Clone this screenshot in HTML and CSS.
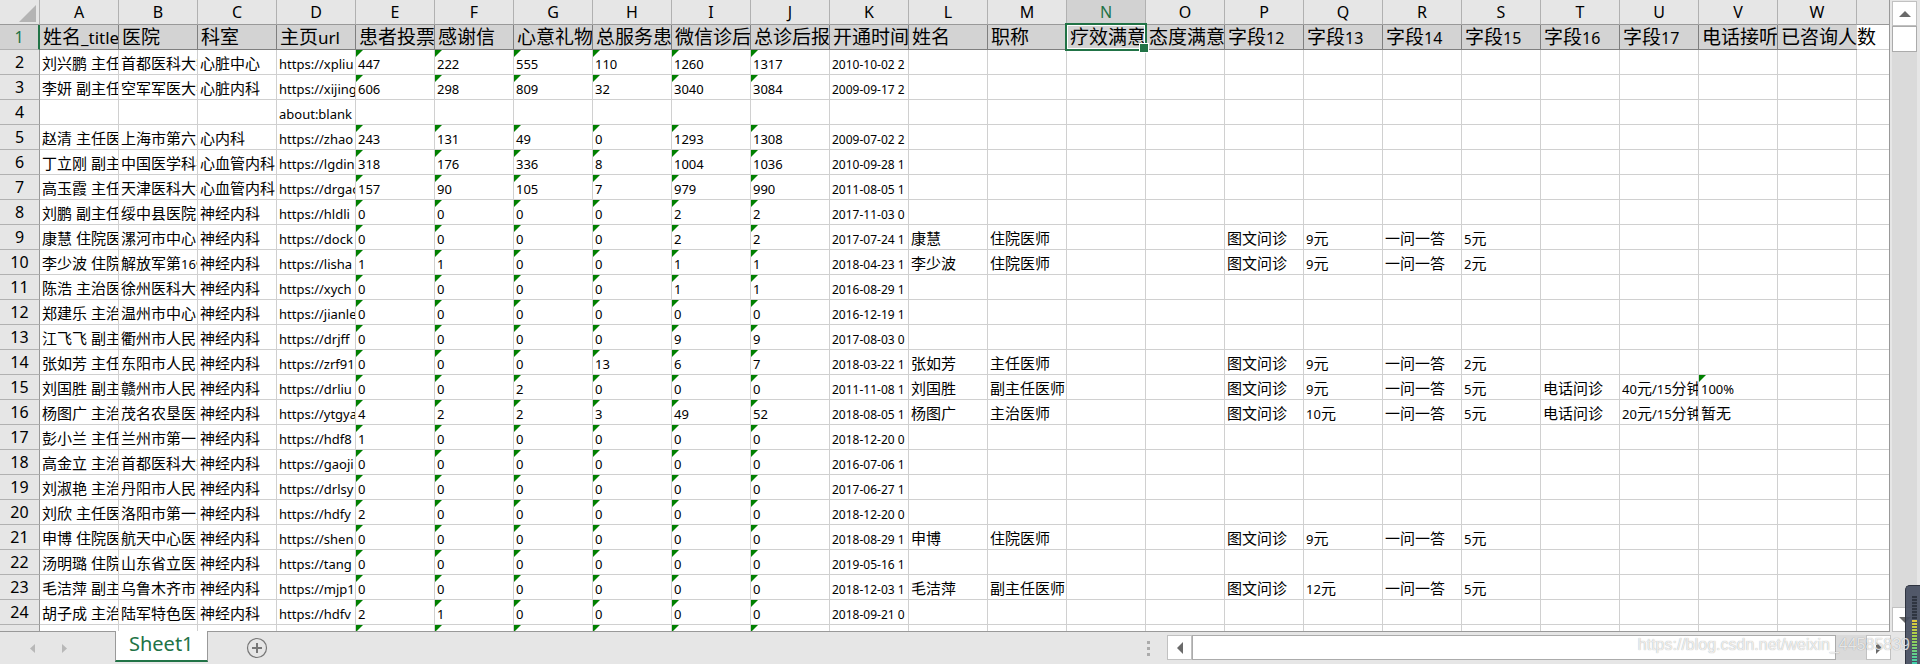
FILE: index.html
```html
<!DOCTYPE html>
<html lang="zh-CN">
<head>
    <meta charset="UTF-8">
    <meta name="viewport" content="width=device-width, initial-scale=1.0">
    <title>Sheet1</title>
    <link rel="stylesheet" href="styles.css">
</head>
<body>

    <main class="workspace">
        <div class="sheet">
            <table class="grid" id="grid">
                <thead></thead>
                <tbody></tbody>
            </table>
        </div>
        <div class="vscroll">
            <button type="button" class="scroll-btn" aria-label="Scroll up">
                <svg width="12" height="6" viewBox="0 0 12 6"><path d="M6 0L12 6H0Z"/></svg>
            </button>
            <div class="vthumb"></div>
            <div class="track"></div>
            <button type="button" class="scroll-btn" aria-label="Scroll down">
                <svg width="12" height="6" viewBox="0 0 12 6"><path d="M0 0H12L6 6Z"/></svg>
            </button>
        </div>
    </main>

    <footer class="bottom-bar">
        <div class="sheet-nav">
            <button type="button" class="nav-btn" aria-label="Previous sheet">
                <svg width="5" height="9" viewBox="0 0 5 9"><path d="M5 0V9L0 4.500Z"/></svg>
            </button>
            <button type="button" class="nav-btn" aria-label="Next sheet">
                <svg width="5" height="9" viewBox="0 0 5 9"><path d="M0 0V9L5 4.500Z"/></svg>
            </button>
        </div>
        <button type="button" class="sheet-tab">Sheet1</button>
        <button type="button" class="add-btn" aria-label="New sheet">
            <svg width="22" height="22" viewBox="0 0 22 22" fill="none" stroke="#777">
                <circle cx="11" cy="11" r="9.500" stroke-width="1.200"/>
                <path d="M11 6V16M6 11H16" stroke-width="2"/>
            </svg>
        </button>
        <div class="splitter"><span></span><span></span><span></span></div>
        <div class="hscroll">
            <button type="button" class="scroll-btn" aria-label="Scroll left">
                <svg width="6" height="12" viewBox="0 0 6 12"><path d="M6 0V12L0 6Z"/></svg>
            </button>
            <div class="hthumb"></div>
            <div class="track"></div>
            <button type="button" class="scroll-btn" aria-label="Scroll right">
                <svg width="6" height="12" viewBox="0 0 6 12"><path d="M0 0V12L6 6Z"/></svg>
            </button>
        </div>
    </footer>

    <div class="meter"><div class="meter-off"></div><div class="meter-on"></div></div>
    <div class="watermark">https://blog.csdn.net/weixin_44585839</div>

    <script src="script.js"></script>
</body>
</html>
```
FILE: styles.css
```css
* {
    box-sizing: border-box;
}

body {
    margin: 0;
    height: 100vh;
    display: flex;
    flex-direction: column;
    overflow: hidden;
    position: relative;
    background: #e6e6e6;
    color: #000;
    font-family: "Noto Sans", "Noto Sans CJK SC", sans-serif;
}

button {
    margin: 0;
    padding: 0;
    border: none;
    background: none;
    font-family: inherit;
    cursor: pointer;
}

svg {
    display: block;
}

.workspace {
    flex: 1;
    min-height: 0;
    display: flex;
}

/* grid */
.sheet {
    flex: 1;
    min-width: 0;
    overflow: hidden;
    background: #fff;
    border-right: 1px solid #999;
    border-bottom: 1px solid #999;
}

.grid {
    width: 1936px;
    table-layout: fixed;
    border-collapse: separate;
    border-spacing: 0;
}

.grid th,
.grid td {
    height: 25px;
    padding: 0;
    font-weight: normal;
    white-space: nowrap;
    overflow: hidden;
    border-right: 1px solid #d0d0d0;
    border-bottom: 1px solid #d0d0d0;
}

.grid th {
    background: #e6e6e6;
    font-size: 16px;
    line-height: 24px;
    text-align: center;
}

.grid thead th {
    border-right-color: #b1b1b1;
    border-bottom-color: #999;
}

.grid .corner {
    width: 40px;
}

.corner svg {
    margin: 2px 3px 0 auto;
}

.grid tbody th {
    border-right-color: #999;
    border-bottom-color: #b1b1b1;
}

.grid thead .active {
    background: #d2d2d2;
    color: #217346;
}

.grid tbody .active {
    background: #d2d2d2;
    color: #217346;
    border-right: 2px solid #217346;
}

.grid td {
    position: relative;
    padding: 2px 0 0 2px;
    font-size: 15px;
    line-height: 22px;
    text-align: left;
}

.latin,
.num {
    font-size: 13px;
    line-height: 1;
}

.date {
    font-size: 12px;
}

.grid .title td {
    padding: 0 0 0 3px;
    font-size: 19px;
    line-height: 24px;
    background: #d3d3d3;
    border-right-color: #7f7f7f;
    border-bottom-color: #7f7f7f;
}

.title .latin {
    font-size: 17px;
}

.title .num {
    font-size: 16px;
}

/* the last title is wider than its column */
.grid .title .spill {
    overflow: visible;
    z-index: 1;
    border-right: none;
}

.grid .title .blank {
    background: #fff;
    border-color: #d0d0d0;
}

.flag::before {
    content: "";
    position: absolute;
    top: 0;
    left: 0;
    border-top: 7px solid #008000;
    border-right: 7px solid transparent;
}

/* selected cell */
.grid .title .selected {
    overflow: visible;
}

.selected::before {
    content: "";
    position: absolute;
    z-index: 2;
    inset: -2px -2px -2px -2px;
    border: 2px solid #217346;
    box-shadow: inset 0 0 0 1px #fff;
}

.selected::after {
    content: "";
    position: absolute;
    z-index: 3;
    right: -4px;
    bottom: -4px;
    width: 8px;
    height: 8px;
    background: #217346;
    border: 1px solid #fff;
}

/* scrollbars */
.vscroll {
    display: flex;
    flex-direction: column;
    width: 30px;
    padding: 1px 3px 0 2px;
}

.scroll-btn {
    flex: none;
    width: 25px;
    height: 25px;
    display: flex;
    align-items: center;
    justify-content: center;
    background: #fff;
    border: 1px solid #c1c1c1;
}

.scroll-btn svg {
    fill: #6a6a6a;
}

.vthumb {
    height: 26px;
    background: #fff;
    border: 1px solid #ababab;
}

.track {
    flex: 1;
    background: #dadada;
}

/* bottom bar */
.bottom-bar {
    display: flex;
    height: 32px;
}

.sheet-nav {
    width: 115px;
    display: flex;
    align-items: center;
    gap: 27px;
    padding-left: 30px;
}

.nav-btn svg {
    fill: #b8b8b8;
}

.sheet-tab {
    position: relative;
    height: 31px;
    margin-top: -1px;
    padding: 0 13px 3px;
    font-size: 20px;
    line-height: 24px;
    color: #217346;
    background: #fff;
    border: 1px solid #999;
    border-top: none;
    border-bottom: 2px solid #217346;
}

.add-btn {
    margin-left: 38px;
    align-self: center;
}

.splitter {
    display: flex;
    flex-direction: column;
    justify-content: center;
    gap: 3px;
    margin-left: auto;
    margin-right: 17px;
}

.splitter span {
    width: 3px;
    height: 3px;
    background: #ababab;
}

.hscroll {
    display: flex;
    width: calc(38% - 6px);
    height: 25px;
    margin-top: 3px;
    margin-right: 29px;
}

.hthumb {
    width: 89%;
    background: #fff;
    border: 1px solid #ababab;
}

/* overlays */
.watermark {
    position: absolute;
    right: 10px;
    bottom: 8px;
    font-family: "Liberation Sans", Arial, sans-serif;
    font-size: 16px;
    line-height: 22px;
    color: rgba(255, 255, 255, 0.8);
    text-shadow: 0 0 1px rgba(0, 0, 0, 0.4);
    pointer-events: none;
}

.meter {
    position: absolute;
    right: 0;
    bottom: 0;
    width: 15px;
    height: 79px;
    padding: 10px 3px 0 6px;
    background: rgba(70, 77, 96, 0.93);
    border: 1px solid #2f3440;
    border-right: none;
    border-bottom: none;
    border-radius: 5px 0 0 0;
}

.meter-off {
    height: 24px;
    background: repeating-linear-gradient(#2f3541 0 2px, #4d5464 2px 3px);
}

.meter-on {
    height: 44px;
    background: repeating-linear-gradient(transparent 0 2px, #464d60 2px 3px), linear-gradient(#e5c93c, #9ed04e 40%, #3fcfae);
}
```
FILE: script.js
```js
const columns = "ABCDEFGHIJKLMNOPQRSTUVW".split("");

const titles = ["姓名_title", "医院", "科室", "主页url", "患者投票", "感谢信", "心意礼物", "总服务患",
    "微信诊后", "总诊后报", "开通时间", "姓名", "职称", "疗效满意", "态度满意", "字段12", "字段13",
    "字段14", "字段15", "字段16", "字段17", "电话接听", "已咨询人数"];

// name, hospital, department, url, six counters, open date, then columns L to V
const rows = [
    ["刘兴鹏 主任", "首都医科大学", "心脏中心", "https://xpliu", "447 222 555 110 1260 1317", "2010-10-02 2"],
    ["李妍 副主任", "空军军医大学", "心脏内科", "https://xijing", "606 298 809 32 3040 3084", "2009-09-17 2"],
    ["", "", "", "about:blank", "", ""],
    ["赵清 主任医", "上海市第六人", "心内科", "https://zhao", "243 131 49 0 1293 1308", "2009-07-02 2"],
    ["丁立刚 副主", "中国医学科学", "心血管内科", "https://lgdin", "318 176 336 8 1004 1036", "2010-09-28 1"],
    ["高玉霞 主任", "天津医科大学", "心血管内科", "https://drgao", "157 90 105 7 979 990", "2011-08-05 1"],
    ["刘鹏 副主任", "绥中县医院", "神经内科", "https://hldli", "0 0 0 0 2 2", "2017-11-03 0"],
    ["康慧 住院医", "漯河市中心", "神经内科", "https://dock", "0 0 0 0 2 2", "2017-07-24 1", "康慧", "住院医师", "", "", "图文问诊", "9元", "一问一答", "5元"],
    ["李少波 住院", "解放军第169", "神经内科", "https://lisha", "1 1 0 0 1 1", "2018-04-23 1", "李少波", "住院医师", "", "", "图文问诊", "9元", "一问一答", "2元"],
    ["陈浩 主治医", "徐州医科大学", "神经内科", "https://xych", "0 0 0 0 1 1", "2016-08-29 1"],
    ["郑建乐 主治", "温州市中心", "神经内科", "https://jianle", "0 0 0 0 0 0", "2016-12-19 1"],
    ["江飞飞 副主", "衢州市人民", "神经内科", "https://drjff", "0 0 0 0 9 9", "2017-08-03 0"],
    ["张如芳 主任", "东阳市人民", "神经内科", "https://zrf91", "0 0 0 13 6 7", "2018-03-22 1", "张如芳", "主任医师", "", "", "图文问诊", "9元", "一问一答", "2元"],
    ["刘国胜 副主", "赣州市人民", "神经内科", "https://drliu", "0 0 2 0 0 0", "2011-11-08 1", "刘国胜", "副主任医师", "", "", "图文问诊", "9元", "一问一答", "5元", "电话问诊", "40元/15分钟", "100%"],
    ["杨图广 主治", "茂名农垦医", "神经内科", "https://ytgya", "4 2 2 3 49 52", "2018-08-05 1", "杨图广", "主治医师", "", "", "图文问诊", "10元", "一问一答", "5元", "电话问诊", "20元/15分钟", "暂无"],
    ["彭小兰 主任", "兰州市第一", "神经内科", "https://hdf8", "1 0 0 0 0 0", "2018-12-20 0"],
    ["高金立 主治", "首都医科大学", "神经内科", "https://gaoji", "0 0 0 0 0 0", "2016-07-06 1"],
    ["刘淑艳 主治", "丹阳市人民", "神经内科", "https://drlsy", "0 0 0 0 0 0", "2017-06-27 1"],
    ["刘欣 主任医", "洛阳市第一人", "神经内科", "https://hdfy", "2 0 0 0 0 0", "2018-12-20 0"],
    ["申博 住院医", "航天中心医", "神经内科", "https://shen", "0 0 0 0 0 0", "2018-08-29 1", "申博", "住院医师", "", "", "图文问诊", "9元", "一问一答", "5元"],
    ["汤明璐 住院", "山东省立医", "神经内科", "https://tang", "0 0 0 0 0 0", "2019-05-16 1"],
    ["毛洁萍 副主", "乌鲁木齐市", "神经内科", "https://mjp1", "0 0 0 0 0 0", "2018-12-03 1", "毛洁萍", "副主任医师", "", "", "图文问诊", "12元", "一问一答", "5元"],
    ["胡子成 主治", "陆军特色医", "神经内科", "https://hdfv", "2 1 0 0 0 0", "2018-09-21 0"],
    ["", "", "", "", "     ", ""]
];

// Latin letters and numbers are set smaller than the Chinese text
function format(text) {
    return text.replace(/[!-~]+( [!-~]+)*/g, function (run) {
        let type = /[a-z]/.test(run) ? "latin" : /\d-\d/.test(run) ? "num date" : "num";
        return `<span class="${type}">${run}</span>`;
    });
}

function buildHead() {
    let html = '<tr><th class="corner"><svg width="17" height="17" viewBox="0 0 17 17"><path d="M17 0V17H0Z" fill="#b4b4b4"/></svg></th>';
    columns.forEach(function (name) {
        html += `<th scope="col"${name === "N" ? ' class="active"' : ""}>${name}</th>`;
    });
    return html + "<th></th></tr>";
}

function buildTitles() {
    let html = '<tr class="title"><th scope="row" class="active">1</th>';
    titles.forEach(function (title, i) {
        let cls = columns[i] === "N" ? "selected" : columns[i] === "W" ? "spill" : "";
        html += `<td class="${cls}">${format(title)}</td>`;
    });
    return html + '<td class="blank"></td></tr>';
}

function buildRow(row, index) {
    let counters = row[4] ? row[4].split(" ") : ["", "", "", "", "", ""];
    let cells = row.slice(0, 4).concat(counters, row.slice(5));
    let html = `<tr><th scope="row">${index + 2}</th>`;
    for (let i = 0; i <= columns.length; i++) {
        let text = cells[i] || "";
        let flagged = (i >= 4 && i <= 9 && row[4]) || text === "100%";
        html += `<td${flagged ? ' class="flag"' : ""}>${format(text)}</td>`;
    }
    return html + "</tr>";
}

let grid = document.getElementById("grid");
grid.tHead.innerHTML = buildHead();
grid.tBodies[0].innerHTML = buildTitles() + rows.map(buildRow).join("");
```
